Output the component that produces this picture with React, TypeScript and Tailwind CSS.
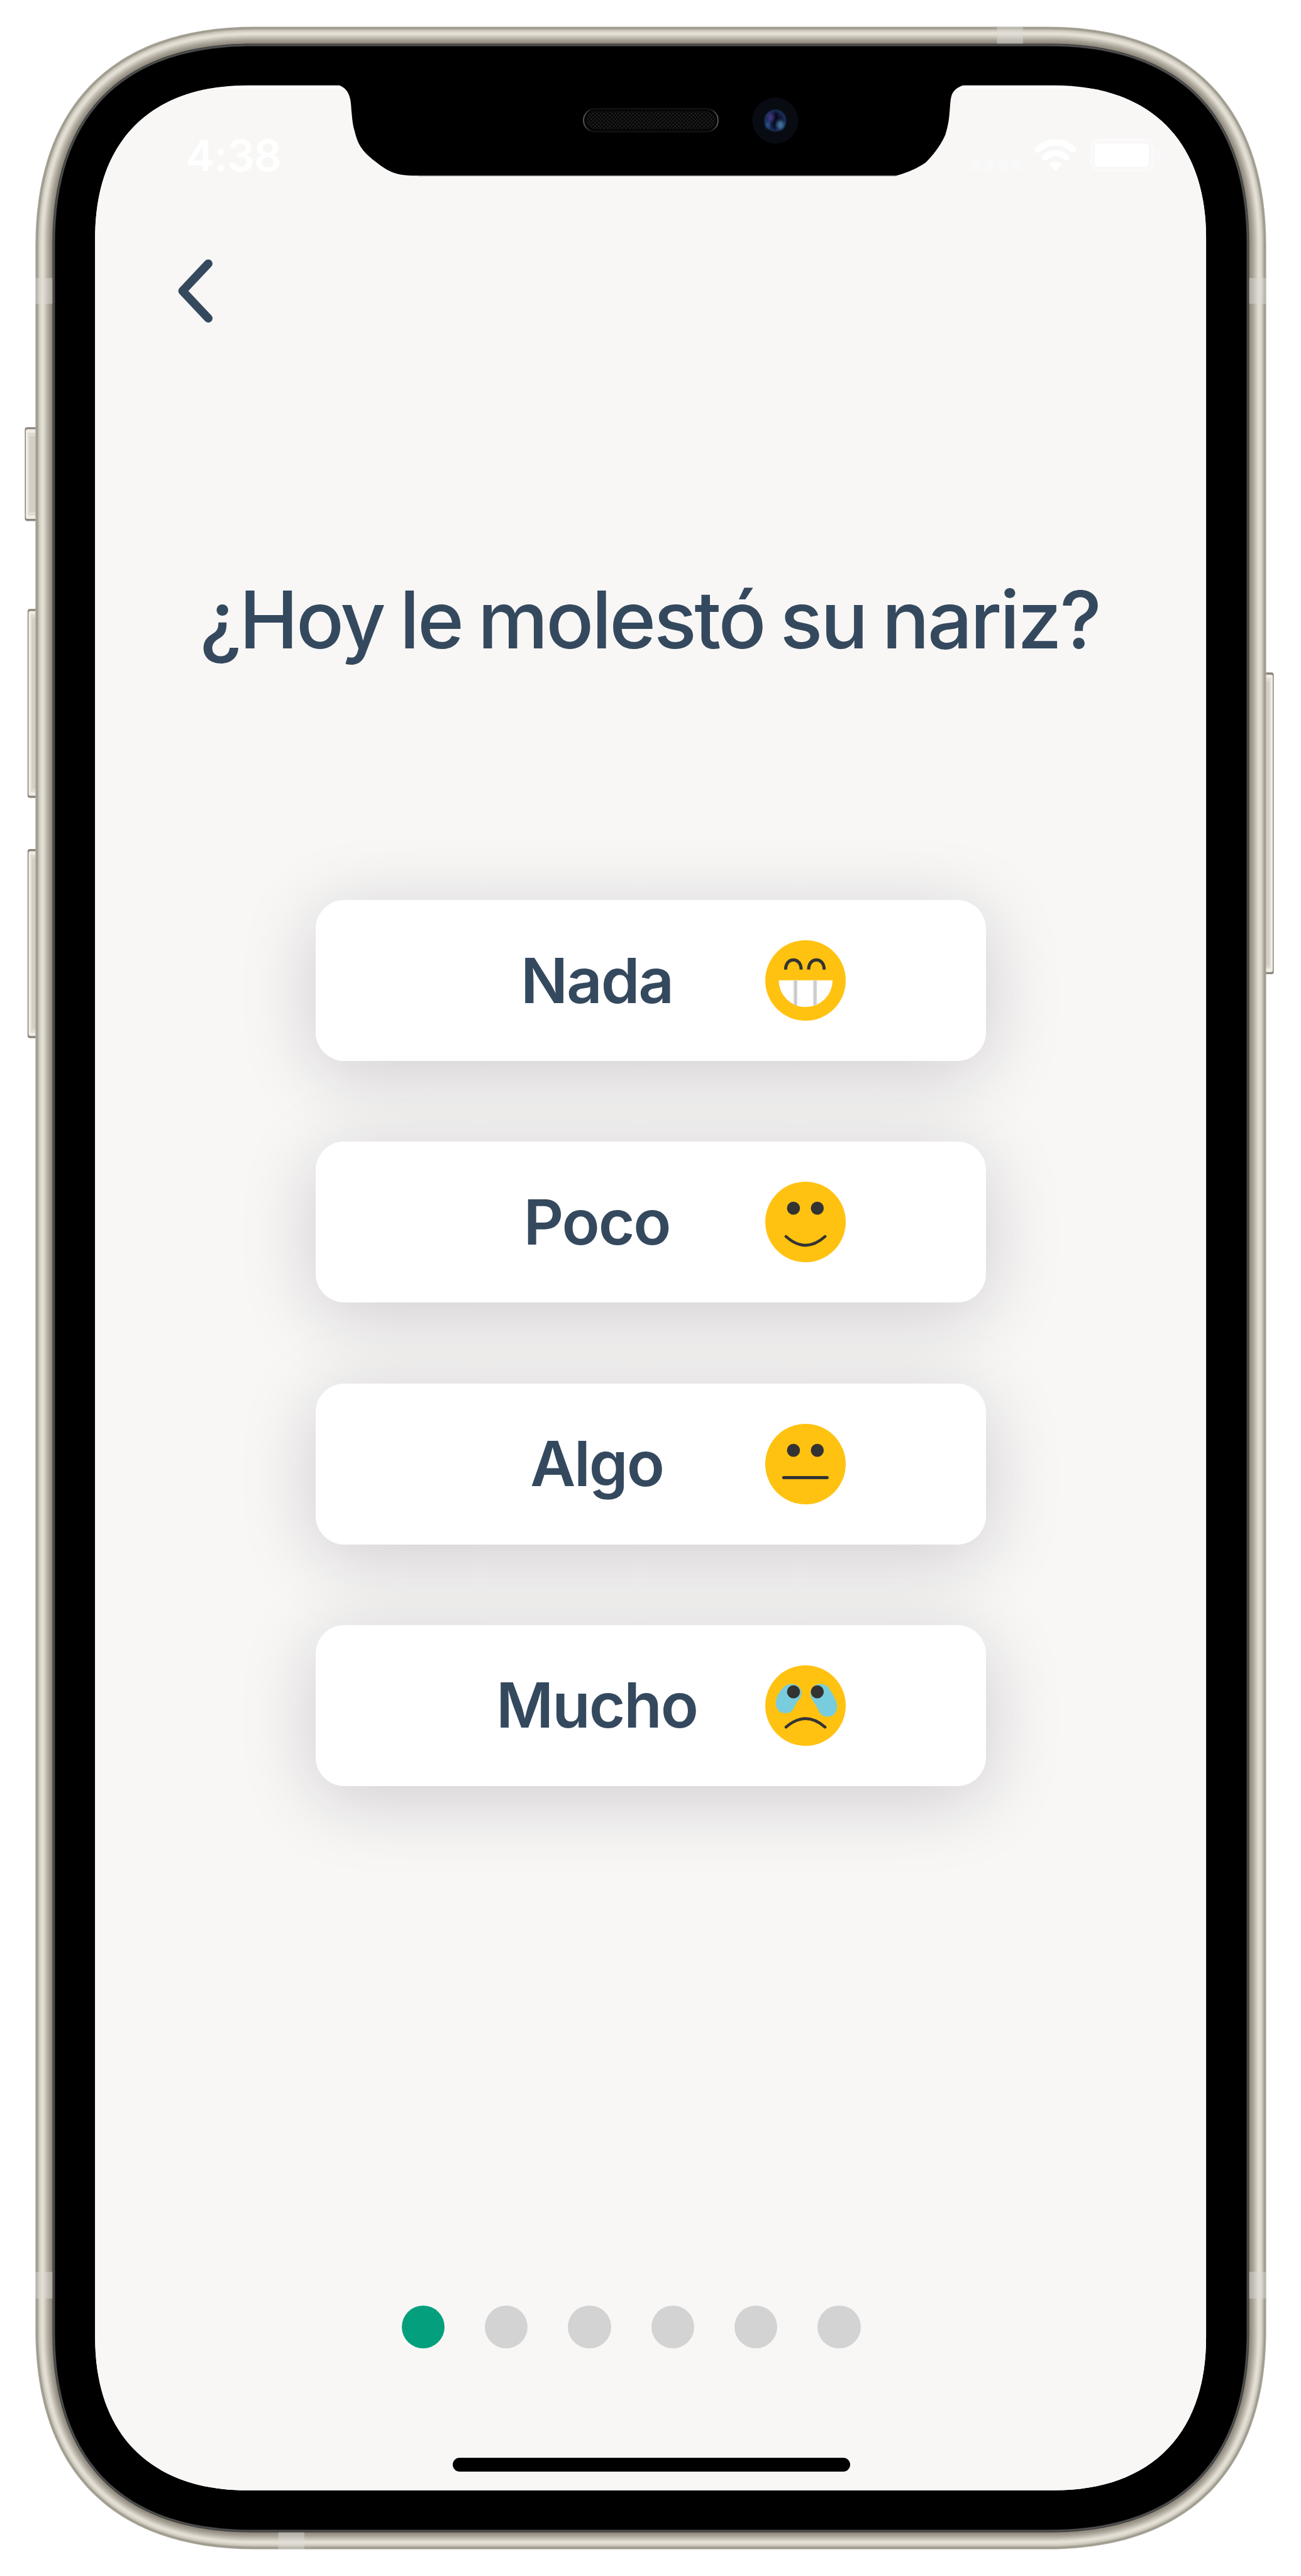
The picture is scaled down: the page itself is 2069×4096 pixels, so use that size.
import React from "react";

type Box = { l: number; t: number; r: number; b: number };

/* Rounded rectangle with continuous corners: `len` is the corner length, `c` the handle distance. */
function squircle({ l, t, r, b }: Box, len: number, c: number): string {
  return [
    `M${l + len} ${t}`,
    `H${r - len}`,
    `C${r - c} ${t} ${r} ${t + c} ${r} ${t + len}`,
    `V${b - len}`,
    `C${r} ${b - c} ${r - c} ${b} ${r - len} ${b}`,
    `H${l + len}`,
    `C${l + c} ${b} ${l} ${b - c} ${l} ${b - len}`,
    `V${t + len}`,
    `C${l} ${t + c} ${l + c} ${t} ${l + len} ${t}`,
    "Z",
  ].join(" ");
}

/* Metal rim, from the outer edge inwards. */
const rim: [number, string][] = [
  [0, "#aaa69b"],
  [1.5, "#a09b8f"],
  [3.5, "#afaa9e"],
  [5, "#cbc6ba"],
  [7, "#d7d2c7"],
  [9, "#e1ddd2"],
  [11, "#e4e0d5"],
  [13, "#dcd8cd"],
  [15, "#cfcabf"],
  [17, "#c2bdb1"],
  [19, "#b5afa4"],
  [21, "#a9a398"],
  [23, "#9f998d"],
  [25, "#969084"],
  [27, "#8c867a"],
  [28, "#434343"],
  [30, "#555555"],
  [31.5, "#333333"],
  [32.5, "#000000"],
];

function SideButton({ x, y, w, h, flip }: { x: number; y: number; w: number; h: number; flip?: boolean }) {
  return (
    <g transform={flip ? `translate(${2 * x + w} 0) scale(-1 1)` : undefined}>
      <rect x={x} y={y} width={w + 8} height={h} rx="4" fill="#8b857b" />
      <rect x={x + 1.6} y={y + 3.5} width={w + 6} height={h - 7} rx="3" fill="#f1ece4" />
      <rect x={x + 5} y={y + 9} width={w} height={h - 18} rx="2" fill="#e0dbd2" />
      <rect x={x + 7.5} y={y + 15} width={w} height={h - 30} fill="#d4cfc5" />
    </g>
  );
}

function Device() {
  return (
    <svg viewBox="0 0 2148 4252" preserveAspectRatio="none" className="absolute inset-0 h-full w-full" aria-hidden="true">
      <defs>
        <pattern id="mesh" width="6" height="6" patternUnits="userSpaceOnUse">
          <rect width="6" height="6" fill="#060606" />
          <circle cx="1.5" cy="1.5" r="1.2" fill="#2b2b2b" />
          <circle cx="4.5" cy="4.5" r="1.2" fill="#2b2b2b" />
        </pattern>
        <linearGradient id="speakerEdge">
          <stop offset="0" stopColor="#5a5a5a" />
          <stop offset="0.06" stopColor="#141414" />
          <stop offset="0.94" stopColor="#141414" />
          <stop offset="1" stopColor="#5a5a5a" />
        </linearGradient>
        <radialGradient id="lens">
          <stop offset="0" stopColor="#0a0a1c" />
          <stop offset="0.55" stopColor="#14173c" />
          <stop offset="0.85" stopColor="#1b3158" />
          <stop offset="1" stopColor="#050a14" />
        </radialGradient>
        <filter id="soft" x="-50%" y="-50%" width="200%" height="200%">
          <feGaussianBlur stdDeviation="2" />
        </filter>
      </defs>

      <SideButton x={41} y={705} w={18} h={155} />
      <SideButton x={45.5} y={1005} w={14} h={312} />
      <SideButton x={45.5} y={1401.5} w={14} h={312} />
      <SideButton x={2089} y={1110} w={14} h={498} flip />

      {rim.map(([i, color]) => (
        <path
          key={i}
          fill={color}
          d={squircle({ l: 58.5 + i, t: 44 + i, r: 2090.5 - i, b: 4208 - i }, 362 - i * 1.1, 129 - i * 0.5)}
        />
      ))}

      <g fill="#dedbd6" fillOpacity="0.45">
        <rect x="58.5" y="459" width="28" height="42.5" />
        <rect x="2062.5" y="459" width="28" height="42.5" />
        <rect x="58.5" y="3750" width="28" height="44" />
        <rect x="2062.5" y="3750" width="28" height="44" />
        <rect x="1646" y="44" width="43" height="28" />
        <rect x="459.5" y="4180" width="43" height="28" />
      </g>

      <path fill="#ffffff" d={squircle({ l: 157, t: 140.8, r: 1991.3, b: 4110.6 }, 252, 92)} />
      <clipPath id="below">
        <rect x="150" y="146" width="1850" height="3970" />
      </clipPath>
      <path fill="#f8f7f6" clipPath="url(#below)" d={squircle({ l: 157, t: 140.8, r: 1991.3, b: 4110.6 }, 252, 92)} />

      <rect x="690" y="289" width="790" height="2.4" fill="#cfcfcf" />
      <path
        fill="#000000"
        d="M560.5 136V141C567 144 572 148 574.5 153C580 163 579.5 176 580.7 187C582 202 583 208 585.7 217C592 245 604 255 628 273C642 283 652 287 664 288.5C674 290 684 290 694 290H1480C1500 284 1514 278 1528.6 268C1546 251 1556 234 1561 222C1567 202 1567 193 1568 183C1569 172 1569 165 1571 158C1574 149 1581 144 1590 141V136Z"
      />

      <rect x="963.5" y="179.5" width="222" height="38" rx="19" fill="#050505" stroke="url(#speakerEdge)" strokeWidth="2" />
      <rect x="968" y="184" width="213" height="29" rx="14.5" fill="url(#mesh)" />

      <circle cx="1280" cy="199" r="38" fill="#080b11" />
      <circle cx="1280" cy="199" r="19.5" fill="url(#lens)" />
      <g filter="url(#soft)">
        <ellipse cx="1272" cy="194" rx="5" ry="7" fill="#3f3882" />
        <ellipse cx="1288.5" cy="206" rx="5.5" ry="7" fill="#3f739c" />
        <ellipse cx="1268" cy="206" rx="3.5" ry="6" fill="#27568e" />
        <ellipse cx="1280.5" cy="199" rx="2" ry="16" fill="#03040c" />
      </g>
    </svg>
  );
}

function StatusIcons() {
  return (
    <svg viewBox="1600 225 320 62" className="h-[60px] w-[308px]" aria-hidden="true">
      <g fill="#faf9fa">
        <rect x="1604.5" y="265" width="15.5" height="16" rx="4" />
        <rect x="1626.5" y="265" width="15.5" height="16" rx="4" />
        <rect x="1648.7" y="265" width="15.5" height="16" rx="4" />
        <rect x="1671" y="265" width="15.5" height="16" rx="4" />
      </g>
      <g fill="none" stroke="#ffffff" strokeWidth="10.5" strokeLinecap="round">
        <path d="M1714 246.5C1730 230.5 1756 230.5 1772 246.5" />
        <path d="M1725.5 259.5C1735.5 250 1750.5 250 1760.5 259.5" />
      </g>
      <path fill="#ffffff" d="M1743 281.5L1733.5 272C1732.5 270.5 1733 269.5 1734.5 269C1739.5 266 1746.5 266 1751.5 269C1753 269.5 1753.5 270.5 1752.5 272Z" />
      <rect x="1803" y="230.5" width="101" height="50" rx="13" fill="none" stroke="#fbfafa" strokeWidth="5" />
      <rect x="1807.5" y="236.5" width="90" height="38.5" rx="6" fill="#ffffff" />
      <path fill="#fbfafa" d="M1910 246C1920 249 1920 260 1910 263Z" />
    </svg>
  );
}

const INK = "#333333";

function Face({ children }: { children: React.ReactNode }) {
  return (
    <svg viewBox="0 0 133 133" className="ml-[106px] h-32 w-32 shrink-0" aria-hidden="true">
      <circle cx="66.5" cy="66.5" r="66.5" fill="#ffc211" />
      {children}
    </svg>
  );
}

function Eyes() {
  return (
    <g fill={INK}>
      <circle cx="46.6" cy="43.8" r="10.7" />
      <circle cx="86" cy="43.8" r="10.7" />
    </g>
  );
}

function Grin() {
  return (
    <Face>
      <g fill="none" stroke={INK} strokeWidth="5.2">
        <path d="M33.7 48.5C33.7 27 59.3 27 59.3 48.5" />
        <path d="M71.7 48.5C71.7 27 97.3 27 97.3 48.5" />
      </g>
      <clipPath id="mouth">
        <path d="M22.3 66H111.3A44.5 44.5 0 0 1 22.3 66Z" />
      </clipPath>
      <g clipPath="url(#mouth)">
        <rect x="20" y="60" width="95" height="60" fill="#ffffff" />
        <rect x="45" y="60" width="8" height="60" fill="#f4f4f4" />
        <rect x="47.3" y="60" width="5.7" height="60" fill="#dadada" />
        <rect x="48.5" y="60" width="2.8" height="60" fill="#c4c4c4" />
        <rect x="78.2" y="60" width="8" height="60" fill="#f4f4f4" />
        <rect x="79.8" y="60" width="5" height="60" fill="#cdcdcd" />
      </g>
    </Face>
  );
}

function Smile() {
  return (
    <Face>
      <Eyes />
      <path d="M34.3 90.5Q66.5 119.5 98.8 90.5" fill="none" stroke={INK} strokeWidth="4.8" strokeLinecap="round" />
    </Face>
  );
}

function Neutral() {
  return (
    <Face>
      <Eyes />
      <path d="M30.5 88.8H102.2" fill="none" stroke={INK} strokeWidth="5.2" strokeLinecap="round" />
    </Face>
  );
}

function Cry() {
  return (
    <Face>
      <g fill="#77cddd">
        <path d="M42.5 30.8C53 30.8 60 37 60 45.5C60 56 53 56.5 49 67C45 76 41 79 33 79C23.5 79 17.5 72 17.5 62.5C17.5 51 29 30.8 42.5 30.8Z" />
        <path d="M91 30.8C100 30.8 104 35 108 42C112 49 118.7 58 118.7 68.5C118.7 78 112 84.8 103 84.8C95 84.8 91 81 87 72.3C82 61 74.7 57 74.7 46C74.7 37 82 30.8 91 30.8Z" />
      </g>
      <Eyes />
      <path d="M34.3 102Q66.5 74 98.8 102" fill="none" stroke={INK} strokeWidth="4.8" strokeLinecap="round" />
    </Face>
  );
}

const options = [
  { label: "Nada", face: <Grin /> },
  { label: "Poco", face: <Smile /> },
  { label: "Algo", face: <Neutral /> },
  { label: "Mucho", face: <Cry /> },
];

export default function App() {
  return (
    <div className="relative h-[4096px] w-[2069px] overflow-hidden bg-white font-['Inter',sans-serif]">
      <Device />
      <main className="relative isolate ml-[151px] flex h-[4096px] w-[1767px] flex-col pt-[136px] text-[#35495e]">
        <header className="flex h-[222px] items-center justify-between pl-[144px] pr-[69px]">
          <span className="text-[69px] font-semibold leading-none tracking-[-1px] text-white">4:38</span>
          <StatusIcons />
        </header>

        <button type="button" aria-label="Volver" className="ml-[130px] mt-[52px] h-[106px] w-[60px]">
          <svg viewBox="293 426 62 110" className="h-full w-full" fill="none" stroke="#35495e" strokeWidth="14" strokeLinecap="round" strokeLinejoin="round">
            <path d="M345 435.5L302.5 480.7L345 525.8" />
          </svg>
        </button>

        <h1 className="mt-[369px] h-[200px] whitespace-nowrap pr-[3px] text-center text-[126px] font-medium leading-[200px] tracking-[-3.4px] [word-spacing:-5px]">
          ¿Hoy le molestó su nariz?
        </h1>

        <div className="ml-[351px] mt-[346px] flex w-[1066px] flex-col gap-[128.3px]">
          {options.map(({ label, face }) => (
            <button
              key={label}
              type="button"
              className="relative flex h-[256px] items-center rounded-[46px] bg-white before:absolute before:inset-0 before:-z-10 before:rounded-[46px] before:shadow-[0_20px_120px_rgba(20,10,26,0.18)]"
            >
              <span className="ml-[285px] w-[324px] shrink-0 text-center text-[99px] font-semibold leading-none tracking-[-2.1px]">{label}</span>
              {face}
            </button>
          ))}
        </div>

        <nav className="ml-[487.5px] mt-[826px] flex gap-[64px]">
          <span className="size-[68.4px] rounded-full bg-[#04a07d]" />
          {[1, 2, 3, 4, 5].map((n) => (
            <span key={n} className="size-[68.4px] rounded-full bg-[#d3d3d3]" />
          ))}
        </nav>

        <div className="ml-[568.5px] mt-[174px] h-[22px] w-[632px] rounded-full bg-black" />
      </main>
    </div>
  );
}
